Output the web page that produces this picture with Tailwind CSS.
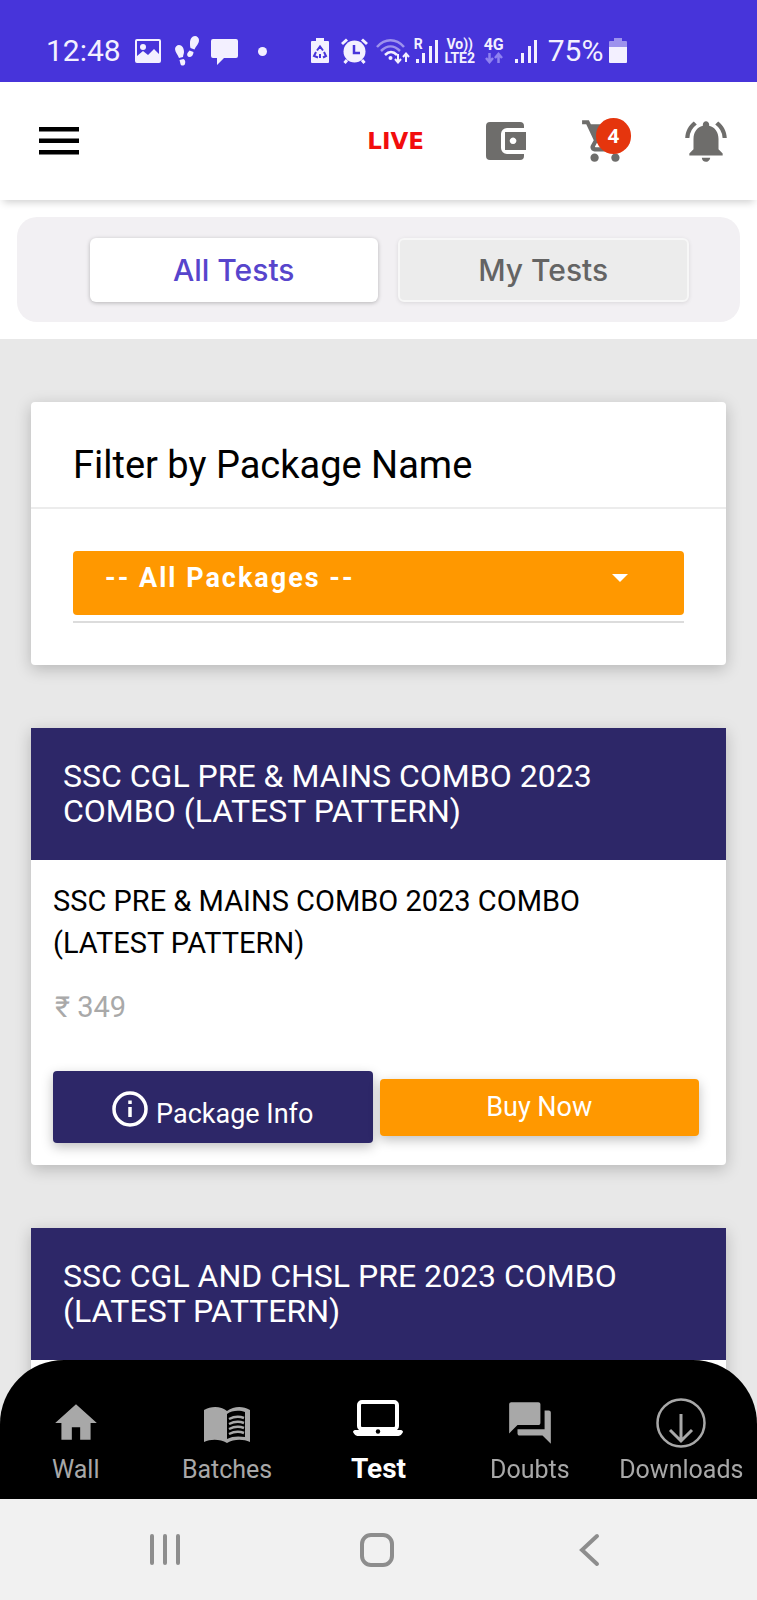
<!DOCTYPE html>
<html lang="en">

<head>
  <meta charset="UTF-8">
  <meta name="viewport" content="width=device-width, initial-scale=1.0">
  <title>Tests</title>
  <script src="https://cdn.jsdelivr.net/npm/@tailwindcss/browser@4"></script>
</head>

<body class="bg-[#e8e8e8] text-black font-['Roboto',sans-serif] h-screen overflow-hidden">

  <!-- Status bar -->
  <div class="bg-[#4734da] text-[#f3f0ff] h-[82px] pt-5 pl-[46px] flex items-center">
    <span class="text-[30px] leading-8">12:48</span>
    <svg class="ml-3.5 w-[26px] h-6" viewBox="0 0 26 24" fill="currentColor">
      <path fill-rule="evenodd" d="M2 0h22a2 2 0 0 1 2 2v20a2 2 0 0 1-2 2H2a2 2 0 0 1-2-2V2a2 2 0 0 1 2-2zM2 2v15l6-5 5 4 6-6 5 5V2z" />
      <circle cx="8" cy="8" r="3" />
    </svg>
    <svg class="ml-3.5 w-6 h-[30px]" viewBox="0 0 24 30" fill="currentColor">
      <path d="M4 9c3 0 5 3 5 7 0 2-1 3-1 5l-4 1C3 19 0 16 0 13c0-2 2-4 4-4zM4.500 24l4-1c2 1 2 3 1.500 5-1 2-4 2-4.500 0z" />
      <path d="M20 0c-3 0-5 3-5 7 0 2 0 3 .5 5l4 1.500C21 10 24 8 24 4c0-2-2-4-4-4zM14.500 14.500l4 1.500c0 3-2 5-4 5s-3-2-2-4z" />
    </svg>
    <svg class="ml-3 w-[27px] h-[30px]" viewBox="0 0 27 30" fill="currentColor">
      <path d="M2 3h23a2 2 0 0 1 2 2v15a2 2 0 0 1-2 2H13l-7 7v-7H2a2 2 0 0 1-2-2V5a2 2 0 0 1 2-2z" />
    </svg>
    <span class="ml-5 w-[9px] h-[9px] rounded-full bg-[#f3f0ff]"></span>

    <svg class="ml-11 w-[18px] h-[26px]" viewBox="0 0 18 26" fill="currentColor">
      <path d="M5 0h8v3h4a1 1 0 0 1 1 1v20a1 1 0 0 1-1 1H1a1 1 0 0 1-1-1V4a1 1 0 0 1 1-1h4z" />
      <path d="M6 12.500L9 8.500l3 4M13 14l2 4-3 1.500M9 20v-4M5 14l-2 4 4 1.500" fill="none" stroke="#4734da" stroke-width="2" />
    </svg>
    <svg class="ml-3 w-[27px] h-[26px]" viewBox="0 0 27 26" fill="currentColor">
      <circle cx="13.500" cy="13.500" r="11" />
      <path d="M1 6l5-4.500M26 6l-5-4.500M6 22l-2.500 3M21 22l2.500 3" stroke="currentColor" stroke-width="3" />
      <path d="M13 7v8h6" fill="none" stroke="#4734da" stroke-width="2.500" />
    </svg>
    <svg class="ml-2 w-[34px] h-[26px]" viewBox="0 0 34 26" fill="none" stroke="currentColor" stroke-width="2.500">
      <path d="M1 9c8-9 19-9 27 0M5 13c6-6 13-6 19 0" opacity=".5" />
      <path d="M9 17c4-4 8-4 12 0" />
      <circle cx="14.500" cy="20" r="2" fill="currentColor" stroke="none" />
      <path d="M22 16v8M19 21l3 3.500 3-3.500M30 24v-8M27 19l3-3.500 3 3.500" stroke-width="2" />
    </svg>
    <span class="ml-1 w-[25px] h-[26px] relative">
      <span class="absolute left-0 top-0 text-sm leading-3 font-bold">R</span>
      <svg class="w-[25px] h-[26px]" viewBox="0 0 25 26" fill="currentColor">
        <path d="M2 21h3v4H2zM8 15h3v10H8zM15 8h3v17h-3zM21 2h3v23h-3z" />
      </svg>
    </span>
    <span class="ml-1 w-[34px] flex flex-col items-center text-[14px] leading-[14px] font-bold">
      <span>Vo))</span>
      <span>LTE2</span>
    </span>
    <span class="ml-1.5 w-[22px] flex flex-col items-center text-base leading-[14px] font-bold">4G
      <svg class="w-[18px] h-3" viewBox="0 0 18 12" fill="none" stroke="#8f82f0" stroke-width="2.500">
        <path d="M4.500 1v9M1 6l3.500 4L8 6M13.500 11V2M10 6l3.500-4L17 6" />
      </svg>
    </span>
    <svg class="ml-2 w-[25px] h-[26px]" viewBox="0 0 25 26" fill="currentColor">
      <path d="M2 21h3v4H2zM8 15h3v10H8zM15 8h3v17h-3zM21 2h3v23h-3z" />
    </svg>
    <span class="ml-2.5 text-[30px] leading-8">75%</span>
    <svg class="ml-1.5 w-[18px] h-[26px]" viewBox="0 0 18 26" fill="currentColor">
      <path d="M5 0h8v3h4a1 1 0 0 1 1 1v6H0V4a1 1 0 0 1 1-1h4z" opacity=".5" />
      <path d="M0 9h18v15a1 1 0 0 1-1 1H1a1 1 0 0 1-1-1z" />
    </svg>
  </div>

  <!-- App header -->
  <header class="relative bg-white h-[118px] pl-[39px] pr-[26px] flex items-center shadow-[0_5px_8px_-3px_rgba(0,0,0,0.2)]">
    <button type="button" aria-label="Menu">
      <svg class="w-10 h-7" viewBox="0 0 40 28" fill="#000">
        <path d="M0 0h40v4.500H0zM0 11.500h40V16H0zM0 23h40v4.500H0z" />
      </svg>
    </button>
    <a href="#" class="ml-auto text-[23px] leading-7 font-bold text-[#f20d0d] font-['DejaVu_Sans',sans-serif]">LIVE</a>
    <button type="button" aria-label="Wallet" class="ml-[62px]">
      <svg class="w-10 h-[38px]" viewBox="0 0 40 38" fill="#6e6d6b">
        <path d="M4 0h30a4 4 0 0 1 4 4v2H21a6 6 0 0 0-6 6v14a6 6 0 0 0 6 6h17v2a4 4 0 0 1-4 4H4a4 4 0 0 1-4-4V4a4 4 0 0 1 4-4z" />
        <path fill-rule="evenodd" d="M19 10h21v18H19zM27 15.500a3.300 3.300 0 1 0 .1 0z" />
      </svg>
    </button>
    <button type="button" aria-label="Cart" class="relative ml-[54px]">
      <svg class="w-[50px] h-[50px]" viewBox="0 0 24 24" fill="#6e6d6b">
        <path d="M7 18c-1.100 0-1.990.9-1.990 2S5.900 22 7 22s2-.9 2-2-.9-2-2-2zM1 2v2h2l3.600 7.590-1.350 2.450c-.16.28-.25.61-.25.96 0 1.100.9 2 2 2h12v-2H7.420c-.14 0-.25-.11-.25-.25l.03-.12.900-1.630h7.450c.75 0 1.410-.41 1.750-1.030l3.580-6.490A1.003 1.003 0 0 0 20 4H5.210l-.94-2H1zm16 16c-1.100 0-1.990.9-1.990 2s.89 2 1.990 2 2-.9 2-2-.9-2-2-2z" />
      </svg>
      <span class="absolute left-4 top-0.5 w-[35px] h-9 rounded-full bg-[#e5350d] text-white text-xl leading-9 font-bold font-['Open_Sans',sans-serif]">4</span>
    </button>
    <button type="button" aria-label="Notifications" class="ml-[51px]">
      <svg class="w-[50px] h-[50px]" viewBox="0 0 24 24" fill="#6e6d6b">
        <path d="M7.580 4.080L6.150 2.650C3.750 4.480 2.170 7.300 2.030 10.500h2a8.445 8.445 0 0 1 3.550-6.420zm12.390 6.420h2c-.15-3.200-1.730-6.020-4.120-7.850l-1.420 1.430a8.495 8.495 0 0 1 3.540 6.420zM18 11c0-3.070-1.640-5.640-4.500-6.320V4c0-.83-.67-1.500-1.500-1.500s-1.500.67-1.500 1.500v.68C7.630 5.360 6 7.920 6 11v5l-2 2v1h16v-1l-2-2v-5zm-6 11c.14 0 .27-.01.4-.04.65-.14 1.180-.58 1.440-1.180.1-.24.15-.5.15-.78h-4c.01 1.100.9 2 2.010 2z" />
      </svg>
    </button>
  </header>

  <!-- Tabs -->
  <div class="bg-white p-[17px]">
    <div class="bg-[#f2f0f3] rounded-[20px] h-[105px] pl-[73px] pr-[51px] flex items-center gap-5 font-['Inter',sans-serif] text-[30px] leading-8 font-medium">
      <button type="button" class="flex-1 h-16 rounded-md bg-white text-[#5745cc] shadow-[0_1px_4px_rgba(0,0,0,0.25)]">All Tests</button>
      <button type="button" class="flex-1 h-16 rounded-md bg-[#ececec] text-[#646464] border-2 border-[#f7f7f7] shadow-[0_1px_4px_rgba(0,0,0,0.1)]">My Tests</button>
    </div>
  </div>

  <main class="px-[31px] pt-[63px] flex flex-col gap-[63px]">

    <!-- Filter -->
    <section class="bg-white rounded shadow-[0_4px_16px_rgba(0,0,0,0.22)]">
      <h2 class="h-[107px] px-[42px] pt-5 flex items-center border-b-2 border-[#ececec] text-[38px] leading-[44px]"><label for="package">Filter by Package Name</label></h2>
      <div class="px-[42px] pt-[42px] pb-[42px]">
        <div class="relative border-b-2 border-[#dcdcdc] pb-[6px]">
          <select id="package" class="block appearance-none w-full h-16 pl-8 pb-2.5 rounded bg-[#ff9800] text-white text-[27px] font-bold tracking-[2px]">
            <option>-- All Packages --</option>
          </select>
          <svg class="absolute right-14 top-[23px] w-4 h-2 pointer-events-none" viewBox="0 0 16 8" fill="#fff">
            <path d="M0 0h16L8 8z" />
          </svg>
        </div>
      </div>
    </section>

    <!-- Packages -->
    <article class="bg-white rounded-b shadow-[0_4px_16px_rgba(0,0,0,0.22)]">
      <h3 class="bg-[#2d2768] text-white h-[132px] px-8 pt-[31px] text-[32px] leading-[35px]">SSC CGL PRE &amp; MAINS COMBO 2023 COMBO (LATEST PATTERN)</h3>
      <div class="pl-[22px] pr-[27px] pt-5 pb-[22px]">
        <p class="pr-8 text-[29px] leading-[42px]">SSC PRE &amp; MAINS COMBO 2023 COMBO (LATEST PATTERN)</p>
        <p class="mt-[22px] pl-0.5 text-[29px] leading-[42px] text-[#a9a9a9]">₹ 349</p>
        <div class="mt-[43px] flex items-center gap-[7px] text-[27px] leading-8 text-white">
          <button type="button" class="flex-1 h-[72px] pt-1 flex items-center justify-center gap-2 rounded bg-[#2d2768] shadow-[0_4px_12px_rgba(0,0,0,0.25)]">
            <svg class="w-9 h-9" viewBox="0 0 36 36" fill="none" stroke="#fff">
              <circle cx="18" cy="18" r="16" stroke-width="3.500" />
              <path d="M18 16v10M18 9.500v3.500" stroke-width="3.500" />
            </svg>
            <span class="pt-2.5">Package Info</span>
          </button>
          <button type="button" class="flex-1 h-[57px] rounded bg-[#ff9800] shadow-[0_4px_12px_rgba(0,0,0,0.25)]">Buy Now</button>
        </div>
      </div>
    </article>

    <article class="bg-white rounded-b shadow-[0_4px_16px_rgba(0,0,0,0.22)]">
      <h3 class="bg-[#2d2768] text-white h-[132px] px-8 pt-[31px] text-[32px] leading-[35px]">SSC CGL AND CHSL PRE 2023 COMBO (LATEST PATTERN)</h3>
      <div class="h-60"></div>
    </article>
  </main>

  <!-- Bottom navigation -->
  <footer class="fixed inset-x-0 bottom-0">
    <nav class="bg-black text-[#a8a8a8] rounded-t-[64px] h-[139px] pt-[38px] grid grid-cols-5 text-[25px] leading-8">
      <a href="#" class="flex flex-col items-center gap-1.5">
        <svg class="w-[50px] h-[50px]" viewBox="0 0 24 24" fill="currentColor">
          <path d="M10 20v-6h4v6h5v-8h3L12 3 2 12h3v8z" />
        </svg>
        Wall
      </a>
      <a href="#" class="flex flex-col items-center gap-1.5">
        <svg class="w-[50px] h-[50px]" viewBox="0 0 50 50">
          <path d="M2 12c7-4 17-4 23 1 7-5 16-5 23-1v32c-7-3-16-3-23 1-7-4-16-4-23-1z" fill="currentColor" />
          <path d="M25 16c5-4 13-4 18-2v25c-6-1-13-1-18 2z" fill="#000" />
          <path d="M27 21c4-2 10-3 15-1M27 26c4-2 10-3 15-1M27 31c4-2 10-3 15-1M27 36c4-2 10-3 15-1" fill="none" stroke="currentColor" stroke-width="2.500" />
        </svg>
        Batches
      </a>
      <a href="#" class="flex flex-col items-center gap-1.5 text-white font-bold text-[28px] leading-[30px]">
        <svg class="w-[52px] h-[50px]" viewBox="0 0 52 50">
          <rect x="7" y="4" width="38" height="27" rx="3" fill="none" stroke="currentColor" stroke-width="4" />
          <path d="M1 34c0-1 1-2 2-2h4l1-3h36l1 3h4c1 0 2 1 2 2-2 4-4 4-6 4H7c-2 0-4 0-6-4z" fill="currentColor" />
          <circle cx="26" cy="33.500" r="2.200" fill="#000" />
        </svg>
        Test
      </a>
      <a href="#" class="flex flex-col items-center gap-1.5">
        <svg class="w-[50px] h-[50px]" viewBox="0 0 24 24" fill="currentColor">
          <path d="M21 6h-2v9H6v2c0 .55.45 1 1 1h11l4 4V7c0-.55-.45-1-1-1zm-4 6V3c0-.55-.45-1-1-1H3c-.55 0-1 .45-1 1v14l4-4h10c.55 0 1-.45 1-1z" />
        </svg>
        Doubts
      </a>
      <a href="#" class="flex flex-col items-center gap-1.5">
        <svg class="w-[50px] h-[50px]" viewBox="0 0 50 50" fill="none" stroke="currentColor">
          <circle cx="25" cy="25" r="23.500" stroke-width="2.500" />
          <path d="M25 16v26M14 32l11 11 11-11" stroke-width="3" />
        </svg>
        Downloads
      </a>
    </nav>

    <!-- System buttons -->
    <div class="bg-[#f1f1f1] h-[101px] pl-[59px] pr-[61px] grid grid-cols-3 items-center justify-items-center">
      <button type="button" aria-label="Recents">
        <svg class="w-[34px] h-[34px]" viewBox="0 0 34 34" fill="none" stroke="#8d8d8d" stroke-width="4" stroke-linecap="round">
          <path d="M4 3v27M17 3v27M30 3v27" />
        </svg>
      </button>
      <button type="button" aria-label="Home">
        <svg class="w-[34px] h-[34px]" viewBox="0 0 34 34" fill="none" stroke="#8d8d8d" stroke-width="4">
          <rect x="2" y="2" width="30" height="30" rx="9" />
        </svg>
      </button>
      <button type="button" aria-label="Back">
        <svg class="w-[34px] h-[34px]" viewBox="0 0 34 34" fill="none" stroke="#8d8d8d" stroke-width="4" stroke-linecap="round">
          <path d="M24 3L9 17l15 14" />
        </svg>
      </button>
    </div>
  </footer>

</body>

</html>
